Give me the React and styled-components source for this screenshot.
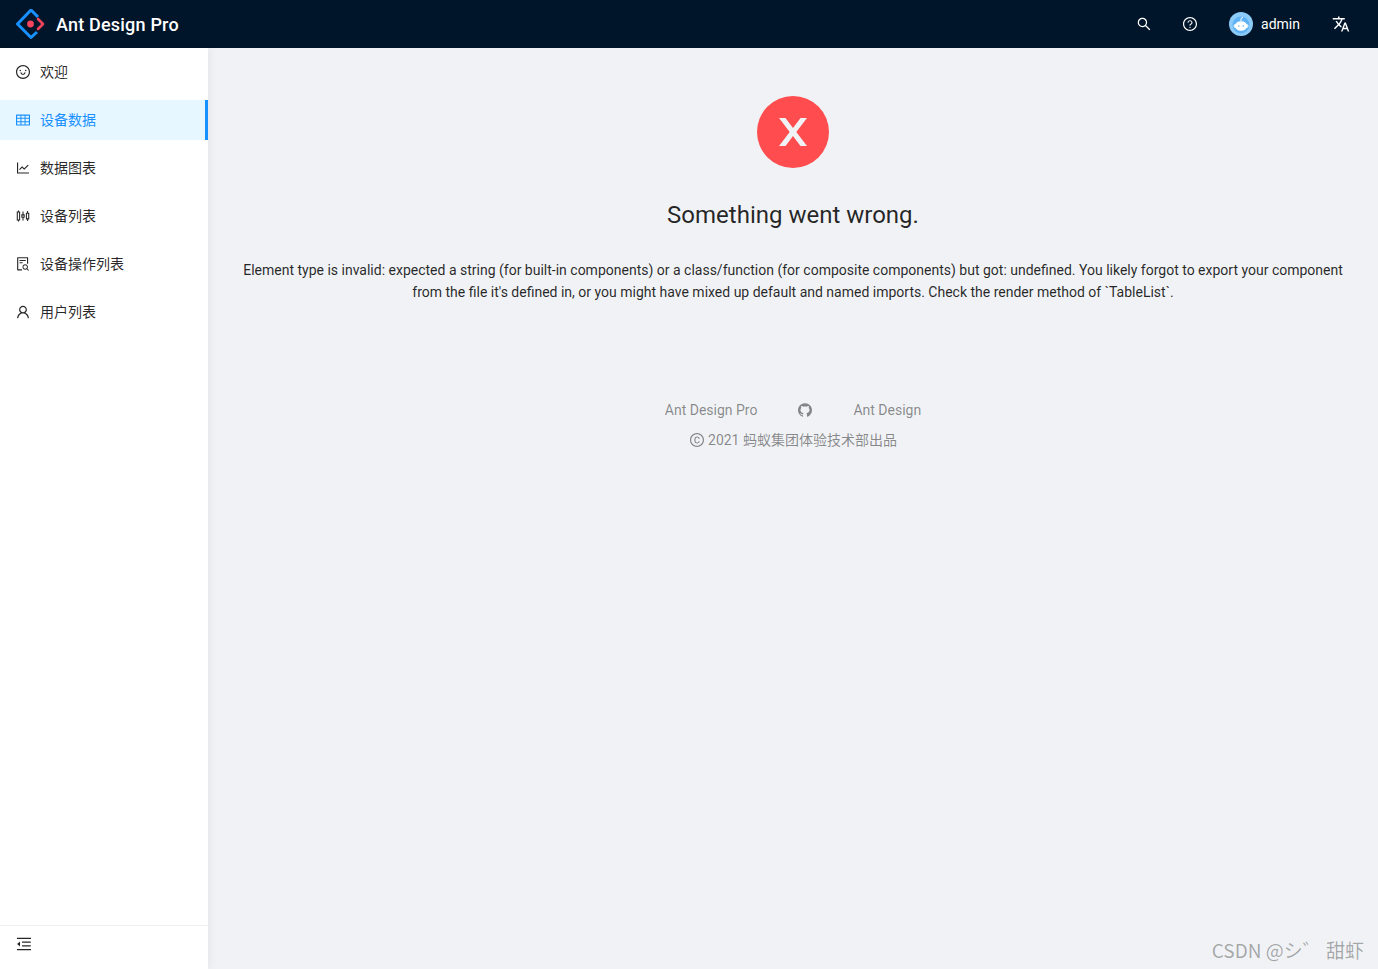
import { createGlobalStyle } from "styled-components";
import styled from "styled-components";
import {
	AiOutlineSmile,
	AiOutlineTable,
	AiOutlineLineChart,
	AiOutlineSliders,
	AiOutlineFileSearch,
	AiOutlineUser,
	AiOutlineSearch,
	AiOutlineQuestionCircle,
	AiOutlineCopyright,
	AiOutlineMenuFold,
	AiFillGithub,
} from "react-icons/ai";

const GlobalStyle = createGlobalStyle`
	html, body {
		margin: 0;
		height: 100%;
		background: #f0f2f5;
	}
	body {
		font-family: Roboto, "Noto Sans CJK SC", sans-serif;
		font-size: 14px;
		color: rgba(0, 0, 0, 0.85);
	}
`;

const Page = styled.div`
	position: relative;
	display: flex;
	flex-direction: column;
	height: 969px;
	overflow: hidden;
`;

const Header = styled.header`
	display: flex;
	align-items: center;
	justify-content: space-between;
	flex: 0 0 48px;
	padding-left: 16px;
	background: #001529;
	color: #fff;
`;

const Brand = styled.div`
	display: flex;
	align-items: center;
	gap: 10px;
`;

const BrandName = styled.span`
	font-size: 18px;
	font-weight: 500;
	letter-spacing: 0.2px;
`;

const Actions = styled.div`
	display: flex;
	align-items: center;
	height: 100%;
	padding-right: 8px;
`;

const Action = styled.span`
	display: flex;
	align-items: center;
	justify-content: center;
	height: 100%;
	width: ${(p) => p.$width}px;
	font-size: 16px;
`;

const Account = styled.span`
	display: flex;
	align-items: center;
	gap: 8px;
	height: 100%;
	padding: 0 12px;
	margin-left: 4px;
`;

const Body = styled.div`
	display: flex;
	flex: 1;
	min-height: 0;
`;

const Sider = styled.aside`
	display: flex;
	flex-direction: column;
	flex: 0 0 208px;
	background: #fff;
	box-shadow: 2px 0 8px 0 rgba(29, 35, 41, 0.05);
`;

const Menu = styled.nav`
	flex: 1;
`;

const MenuItem = styled.div`
	display: flex;
	align-items: center;
	gap: 9px;
	height: 40px;
	margin: 4px 0 8px;
	padding-left: 15px;
	font-family: "Noto Sans CJK SC", sans-serif;
	color: ${(p) => (p.$active ? "#1890ff" : "rgba(0, 0, 0, 0.85)")};
	background: ${(p) => (p.$active ? "#e6f7ff" : "transparent")};
	border-right: 3px solid ${(p) => (p.$active ? "#1890ff" : "transparent")};
	svg {
		font-size: 16px;
	}
`;

const MenuLabel = styled.span`
	margin-bottom: 2px;
`;

const Collapse = styled.div`
	flex: 0 0 44px;
	box-sizing: border-box;
	padding: 9px 0 0 15px;
	border-top: 1px solid #f0f0f0;
	font-size: 18px;
	line-height: 18px;
	color: rgba(0, 0, 0, 0.85);
`;

const Main = styled.main`
	flex: 1;
	display: flex;
	flex-direction: column;
	align-items: center;
	padding: 48px 32px 0;
	text-align: center;
`;

const ErrorIcon = styled.div`
	display: flex;
	align-items: center;
	justify-content: center;
	width: 72px;
	height: 72px;
	border-radius: 50%;
	background: #ff4d4f;
`;

const Title = styled.div`
	margin-top: 31px;
	font-size: 24px;
	line-height: 32px;
	color: rgba(0, 0, 0, 0.85);
`;

const Message = styled.div`
	margin-top: 28px;
	font-size: 14px;
	line-height: 22px;
`;

const Footer = styled.footer`
	margin-top: 96px;
	color: rgba(0, 0, 0, 0.45);
`;

const Links = styled.div`
	display: flex;
	justify-content: center;
	align-items: center;
	gap: 40px;
	margin-bottom: 8px;
	line-height: 22px;
`;

const Copyright = styled.div`
	display: flex;
	align-items: center;
	justify-content: center;
	gap: 3px;
	line-height: 22px;
`;

const Watermark = styled.div`
	position: absolute;
	right: 14px;
	bottom: 6px;
	font-family: "Noto Sans CJK SC", sans-serif;
	font-size: 19px;
	color: rgba(0, 0, 0, 0.32);
`;

const Logo = () => (
	<svg width="30" height="30" viewBox="0 0 30 30" fill="none">
		<path d="M21 23l-6 5.5L1.5 15 15 1l7 7" stroke="#1890ff" strokeWidth="3" strokeLinejoin="round" />
		<path d="M22 10l5 5-5 5" stroke="#f5455c" strokeWidth="2.6" strokeLinecap="round" strokeLinejoin="round" />
		<circle cx="14.5" cy="15" r="3.4" fill="#f5455c" />
	</svg>
);

const Avatar = () => (
	<svg width="24" height="24" viewBox="0 0 24 24">
		<circle cx="12" cy="12" r="12" fill="#8ccbf8" />
		<circle cx="12" cy="13" r="8.5" fill="#5fb2f5" />
		<path d="M12 9V6.5l2-1.5" stroke="#fff" strokeWidth="1" fill="none" />
		<rect x="4.5" y="12" width="15" height="4" rx="2" fill="#dff0fd" />
		<ellipse cx="12" cy="14" rx="6" ry="4.8" fill="#fff" />
		<circle cx="9.8" cy="14" r="0.8" fill="#5fb2f5" />
		<circle cx="14.2" cy="14" r="0.8" fill="#5fb2f5" />
	</svg>
);

const Translate = () => (
	<svg width="18" height="18" viewBox="0 0 24 24" fill="#fff">
		<path d="M12.87 15.07l-2.54-2.51.03-.03c1.74-1.94 2.98-4.17 3.71-6.53H17V4h-7V2H8v2H1v1.99h11.17C11.5 7.92 10.44 9.75 9 11.35 8.07 10.32 7.3 9.19 6.69 8h-2c.73 1.63 1.73 3.17 2.98 4.56l-5.09 5.02L4 19l5-5 3.11 3.11.76-2.04zM18.5 10h-2L12 22h2l1.12-3h4.75L21 22h2l-4.5-12zm-2.62 7l1.62-4.33L19.12 17h-3.24z" />
	</svg>
);

const menu = [
	{ icon: AiOutlineSmile, label: "欢迎" },
	{ icon: AiOutlineTable, label: "设备数据", active: true },
	{ icon: AiOutlineLineChart, label: "数据图表" },
	{ icon: AiOutlineSliders, label: "设备列表" },
	{ icon: AiOutlineFileSearch, label: "设备操作列表" },
	{ icon: AiOutlineUser, label: "用户列表" },
];

export default function App() {
	return (
		<Page>
			<GlobalStyle />
			<Header>
				<Brand>
					<Logo />
					<BrandName>Ant Design Pro</BrandName>
				</Brand>
				<Actions>
					<Action $width={46}>
						<AiOutlineSearch />
					</Action>
					<Action $width={46}>
						<AiOutlineQuestionCircle />
					</Action>
					<Account>
						<Avatar />
						admin
					</Account>
					<Action $width={58}>
						<Translate />
					</Action>
				</Actions>
			</Header>
			<Body>
				<Sider>
					<Menu>
						{menu.map((item) => (
							<MenuItem key={item.label} $active={item.active}>
								<item.icon />
								<MenuLabel>{item.label}</MenuLabel>
							</MenuItem>
						))}
					</Menu>
					<Collapse>
						<AiOutlineMenuFold />
					</Collapse>
				</Sider>
				<Main>
					<ErrorIcon>
						<svg width="28" height="28" viewBox="0 0 28 28">
							<path d="M0 0h6.5L14 10 21.5 0H28L17.3 14 28 28h-6.5L14 18 6.5 28H0l10.7-14z" fill="#f0f2f5" />
						</svg>
					</ErrorIcon>
					<Title>Something went wrong.</Title>
					<Message>
						Element type is invalid: expected a string (for built-in components) or a class/function (for composite components) but got: undefined. You likely forgot to export your component from the file it's defined in, or you might have mixed up default and named imports. Check the render method of `TableList`.
					</Message>
					<Footer>
						<Links>
							<span>Ant Design Pro</span>
							<AiFillGithub size={16} />
							<span>Ant Design</span>
						</Links>
						<Copyright>
							<AiOutlineCopyright size={16} />
							2021 蚂蚁集团体验技术部出品
						</Copyright>
					</Footer>
				</Main>
			</Body>
			<Watermark>CSDN @シ゛ 甜虾</Watermark>
		</Page>
	);
}
